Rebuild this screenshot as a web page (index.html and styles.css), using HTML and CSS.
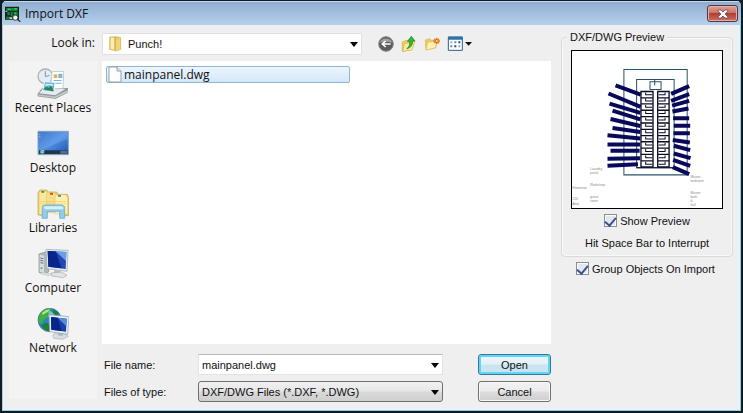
FILE: index.html
```html
<!DOCTYPE html>
<html lang="en">
<head>
<meta charset="utf-8">
<meta name="viewport" content="width=device-width, initial-scale=1">
<title>Import DXF</title>
<link rel="stylesheet" href="styles.css">
</head>
<body>
<form class="window">
  <header class="titlebar">
    <svg class="app-icon" viewBox="14 12 48 48" aria-hidden="true">
      <path fill="#17221c" d="M14 14h42v39H14z"/>
      <path fill="#168a3e" d="M18 18h34v8H18zM21 30h7v10h-7zM31 29h6v14h-6zM40 29h12v12H40zM17 44h14v6H17z"/>
      <path fill="#39c36a" d="M23 20h8v4h-8zM42 18h8v5h-8zM42 32h5v4h-5z"/>
      <path fill="#c9cfc9" d="M15 26h6v3h-6zM28 46h8v5h-8z"/>
      <circle cx="45" cy="47" r="8" fill="#eef3ea" stroke="#353c37" stroke-width="3"/>
      <path stroke="#2a302c" stroke-width="4" d="M51 52l9 7"/>
    </svg>
    <h1 class="title">Import DXF</h1>
    <button class="close" type="button" aria-label="Close">
      <svg viewBox="0 0 12 10" aria-hidden="true"><path d="M1 1h3l2 2 2-2h3v1L8 5l3 3v1H8L6 7 4 9H1V8l3-3-3-3z" fill="#fff" stroke="#6c4a50" stroke-width=".8"/></svg>
    </button>
  </header>

  <div class="content">
    <div class="browser">
      <label class="lookin-label" for="lookin">Look in:</label>
      <div class="lookin-row">
        <div class="combo combo-folder">
          <svg class="folder" viewBox="324 108 48 48" aria-hidden="true">
            <path d="M329 111l19-1 14 3v35l-14 5-19-5z" fill="#e8c55c" stroke="#cfae54" stroke-width="2"/>
            <path d="M332 113h12v37l-12-4z" fill="#fbeeb0"/>
            <path d="M347 118l13-4v34l-13 5z" fill="#f2d573"/>
            <path d="M345 112v38" stroke="#b98d2c" stroke-width="2"/>
          </svg>
          <select id="lookin" class="field"><option>Punch!</option></select>
        </div>
        <div class="tools">
          <button class="tool" type="button" aria-label="Back">
            <svg viewBox="114 106 48 48"><circle cx="138" cy="130" r="22" fill="#5b5b5b" stroke="#8b8b8b" stroke-width="3"/><path d="M119 126a20 18 0 0 1 38 0q-19-6-38 0z" fill="#a0a0a0"/><path d="M152 130h-24m9-9l-10 9 10 9" fill="none" stroke="#fff" stroke-width="5"/></svg>
          </button>
          <button class="tool" type="button" aria-label="Up one level">
            <svg viewBox="183 106 48 48"><path d="M187 124l12-5 6 4 15-3-6 27-27 5z" fill="#f0cf62" stroke="#d0a73c" stroke-width="2"/><path d="M193 130l32-8-9 26-28 4z" fill="#fbec9d" stroke="#d5b145" stroke-width="2"/><path d="M200 144q10-4 9-22h-7l12-15 11 14h-7q0 20-18 23z" fill="#36ba35" stroke="#1c7c25" stroke-width="2"/></svg>
          </button>
          <button class="tool" type="button" aria-label="Create new folder">
            <svg viewBox="252 106 48 48"><path d="M256 118l13-4 5 5 14-2v24l-30 7z" fill="#eccb68" stroke="#d8b24d" stroke-width="2"/><path d="M263 125l30-4-8 21-27 6z" fill="#fcf0b4" stroke="#dfbd5a" stroke-width="2"/><path d="M290 111v20M280 121h20M283 114l14 14M297 114l-14 14" stroke="#e77326" stroke-width="4"/><circle cx="290" cy="121" r="3" fill="#ffe67e"/></svg>
          </button>
          <button class="tool tool-wide" type="button" aria-label="View menu">
            <svg viewBox="321 106 78 48"><path d="M325 109h42v40h-42z" fill="#fff" stroke="#235f94" stroke-width="3"/><path d="M324 108h44v9h-44z" fill="#2c73ad"/><path d="M331 122h6v6h-6zM355 134h6v6h-6z" fill="#98a9bd"/><path d="M343 122h6v6h-6zM331 134h6v6h-6z" fill="#5f8fb1"/><path d="M355 122h6v6h-6zM343 134h6v6h-6z" fill="#244e70"/><path d="M375 124h21l-10 11z" fill="#111"/></svg>
          </button>
        </div>
      </div>

      <nav class="places" aria-label="Places">
        <a class="place" href="#recent">
          <svg viewBox="106 24 96 96" aria-hidden="true"><defs><linearGradient id="screen" x1="0" y1="0" x2="1" y2="1"><stop stop-color="#265bb7"/><stop offset=".5" stop-color="#4f8ce2"/><stop offset="1" stop-color="#1e51ac"/></linearGradient></defs>
            <path d="M108 101l14-18 77 1-2 14-35 18-54-7z" fill="#8e969c"/><path d="M112 100l15-16 65 2-31 20z" fill="#e7eaec"/><path d="M110 103l50 6 37-19v8l-36 17-52-7z" fill="#c5cbd0" stroke="#888e93"/>
            <circle cx="131" cy="49" r="22" fill="#e6edf0" stroke="#a7b1b6" stroke-width="4"/><path d="M131 33v17l13-4" fill="none" stroke="#7f9da9" stroke-width="3"/>
            <path d="M151 35l35-1-2 51-37 2z" fill="#fff" stroke="#abb8bf" stroke-width="2"/><path d="M156 43h11v11h-11z" fill="#e2b25e"/><path d="M170 41h12v13h-12zM156 60h24v3h-24zM156 68h24v3h-24z" fill="#7db4dc"/>
            <path d="M129 65l31 2-4 30-33-5z" fill="#60b4e4" stroke="#f4f7f7" stroke-width="3"/><path d="M125 88q11-12 16-4l7-7 9 17z" fill="#2c8348"/><path d="M132 71l22 1-1 6q-11-4-22 0z" fill="#d8effa"/></svg>
          Recent Places</a>
        <a class="place" href="#desktop">
          <svg viewBox="106 204 96 96" aria-hidden="true"><path d="M109 214h91v70h-91z" fill="url(#screen)" stroke="#83a6c1" stroke-width="3"/><path d="M111 216h87v20L111 273z" fill="#9bd0ff" opacity=".23"/><path d="M112 271h86v11h-86z" fill="#20364f"/><path d="M176 272h21v9h-21z" fill="#51708b"/><circle cx="122" cy="275" r="7" fill="#439eb0"/><path d="M117 274l10-3M117 278l10-2" stroke="#dceeb4" stroke-width="2"/><path d="M113 221h3v3h-3zM113 229h3v3h-3z" fill="#bfdcf5"/></svg>
          Desktop</a>
        <a class="place" href="#libraries">
          <svg viewBox="106 24 96 96" aria-hidden="true"><path d="M109 105V38l6-8h20l5 6h25l4 7h28l4 9v55h-22V88h-45v19z" fill="#e9ca69" stroke="#c6a64b" stroke-width="2"/><path d="M113 40l4-6h16l6 7v61h-26z" fill="#f9e9a0"/><path d="M134 45l4-8h19l7 7v54h-30z" fill="#f6df88" stroke="#d2b259"/><path d="M160 52l5-8h27l6 8v50h-38z" fill="#fff1ac" stroke="#d2b259"/><path d="M119 33h9v5h-9z" fill="#3f9a43"/><path d="M145 38h9v6h-9z" fill="#c15339"/><path d="M169 45h9v5h-9z" fill="#4188bc"/><path d="M114 65h80M114 72h80" stroke="#e9cb70" stroke-width="2"/><path d="M121 115l1-36 8-4h51l8 5v35h-15V94h-37v21z" fill="#91cdeb" stroke="#5ba5cb" stroke-width="2"/><path d="M126 82l6-3h48l5 4-2 5h-53z" fill="#d7f0fc"/></svg>
          Libraries</a>
        <a class="place" href="#computer">
          <svg viewBox="106 204 96 96" aria-hidden="true"><path d="M112 222l20-6 9 5v55l-12 7-17-6z" fill="#aeb7bb" stroke="#80898e" stroke-width="2"/><path d="M114 224l13 3v52l-13-4z" fill="#d5dcdf"/><path d="M116 234l9 2M116 241l9 2M116 248l9 2" stroke="#637078" stroke-width="3"/><path d="M117 262h5v5h-5z" fill="#55a653"/><path d="M133 208l66 3-3 63-60-8z" fill="#e7ebed" stroke="#9aa4aa" stroke-width="2"/><path d="M138 213l56 3-2 51-52-7z" fill="#2049b2"/><path d="M138 213l24 1 18 51-40-5z" fill="#09258c"/><path d="M162 214l32 2-1 27z" fill="#6b9eea"/><path d="M158 270l18 2 1 11-20-2z" fill="#b5bec4"/><path d="M148 279l31-3 17 10-11 7-35-5z" fill="#e1e5e7" stroke="#a3abb0" stroke-width="2"/><path d="M123 277l26 5-6 6-27-7z" fill="#dce1e3" stroke="#a7b0b6"/></svg>
          Computer</a>
        <a class="place" href="#network">
          <svg viewBox="106 54 96 96" aria-hidden="true"><circle cx="144" cy="90" r="35" fill="#2587bf" stroke="#3a769d" stroke-width="2"/><path d="M112 77q10-21 31-22l8 9-14 8 4 9-15 8-5 13-11-7z" fill="#43ad43"/><path d="M118 106l17-9 14 15-7 12q-15-3-24-18zM156 58l16 11-9 8-10-6z" fill="#237d38"/><path d="M121 69q12-12 24-11l-6 7-17 10z" fill="#b7e57d"/><path d="M142 62q14 4 20 18h-23z" fill="#9fd9ee" opacity=".7"/><path d="M160 129l25 1 15 9-17 9-27-3-3-9z" fill="#d7dde0" stroke="#aab1b6" stroke-width="2"/><path d="M169 120h15v17h-15z" fill="#aeb8be"/><path d="M142 74l60 6-4 53-54-8z" fill="#e7edf2" stroke="#909fa9" stroke-width="2"/><path d="M148 81l47 5-2 39-44-6z" fill="#173fac"/><path d="M148 81l20 2 12 40-31-4z" fill="#09238e"/><path d="M168 83l27 3-1 23z" fill="#568ae0"/></svg>
          Network</a>
      </nav>

      <div class="files">
        <button class="file" type="button">
          <svg viewBox="0 0 14 17" aria-hidden="true"><path d="M1 1h8l4 4v11H1z" fill="#fff" stroke="#96a0aa"/><path d="M9 1v4h4" fill="#e6ebef" stroke="#96a0aa"/></svg>
          mainpanel.dwg
        </button>
      </div>

      <div class="entry">
        <label for="filename">File name:</label>
        <div class="combo"><input id="filename" class="field" type="text" value="mainpanel.dwg"></div>
        <button class="button primary" type="submit">Open</button>
        <label for="filetype">Files of type:</label>
        <div class="combo"><select id="filetype" class="field raised"><option>DXF/DWG Files (*.DXF, *.DWG)</option></select></div>
        <button class="button" type="button">Cancel</button>
      </div>
    </div>

    <aside class="side">
      <fieldset class="group">
        <legend>DXF/DWG Preview</legend>
        <svg class="preview" viewBox="21 -27 448 468" role="img" aria-label="Drawing preview">
          <g fill="none" stroke="#28506a" stroke-width="3">
            <path d="M176 28h189v315H176zM214 58h112v264H214zM254 65h33v23h-33zM268 58v18"/>
          </g>
          <g fill="none" stroke="#080c24" stroke-width="4">
            <path d="M227 94h36v225h-36zM277 94h34v225h-34z"/>
            <path d="M227 113h36m-36 18h36m-36 19h36m-36 19h36m-36 19h36m-36 19h36m-36 19h36m-36 18h36m-36 19h36m-36 19h36m-36 19h36M277 113h34m-34 18h34m-34 19h34m-34 19h34m-34 19h34m-34 19h34m-34 19h34m-34 18h34m-34 19h34m-34 19h34m-34 19h34"/>
            <path d="M241 97v7h20m-20 11v7h20m-20 12v7h20m-20 12v7h20m-20 12v7h20m-20 12v7h20m-20 12v7h20m-20 12v7h20m-20 11v7h20m-20 12v7h20m-20 12v7h20m-20 12v7h20M280 104h19v-7m-19 25h19v-7m-19 26h19v-7m-19 26h19v-7m-19 26h19v-7m-19 26h19v-7m-19 26h19v-7m-19 26h19v-7m-19 25h19v-7m-19 26h19v-7m-19 26h19v-7m-19 26h19v-7" stroke-width="3"/>
            <path d="M214 322h112" stroke-width="3"/>
          </g>
          <g fill="none" stroke="#08085c" stroke-width="12">
            <path d="M151 76l75 27M130 100l96 40M133 130l92 28M142 151l83 26M136 176l89 21M142 203l83 12M127 225l98 9M127 252h97M136 271h87M127 295l97-2M127 316l91-5"/>
            <path d="M317 101l54-23M317 122l54-20M320 136l51-14M321 154l48-9M323 174h48M325 196h49M324 219h49M322 239l51 7M325 256l49 13M325 279l50 14M323 298l51 18M322 320l49 21"/>
          </g>
          <g class="notes">
            <text x="75" y="327">Laundry</text><text x="75" y="340">panel</text><text x="75" y="375">Workshop</text><text x="22" y="386">Hometran</text>
            <text x="75" y="411">guest</text><text x="75" y="424">room</text><text x="22" y="417">220</text><text x="22" y="432">Amp</text>
            <text x="375" y="351">Master</text><text x="375" y="363">bedroom</text><text x="375" y="399">Master</text><text x="375" y="411">bath</text><text x="375" y="423">&amp;</text><text x="375" y="435">hall</text>
          </g>
        </svg>
        <label class="check"><input type="checkbox" checked>Show Preview</label>
        <p class="hint">Hit Space Bar to Interrupt</p>
      </fieldset>
      <label class="check check-import"><input type="checkbox" checked>Group Objects On Import</label>
    </aside>
  </div>
</form>
</body>
</html>
```
FILE: styles.css
```css
* { box-sizing: border-box; }

body {
  margin: 0;
  background: #10202c;
  color: #111;
  font-family: "Liberation Sans", Arial, sans-serif;
  font-size: 11px;
}

button, input, select { font: inherit; color: inherit; margin: 0; }

.window {
  display: flex;
  flex-direction: column;
  min-height: 100vh;
  border: 2px solid #0b1c26;
  border-top-width: 1px;
  border-radius: 6px 6px 0 0;
  background: #efefef;
  box-shadow: inset -1px -1px #9ccbd6, inset 1px 0 #b4cbd6, inset -3px -3px #e5f4fb;
  overflow: hidden;
}

.titlebar {
  display: flex;
  align-items: center;
  gap: 4px;
  height: 24px;
  padding: 0 3px;
  background: linear-gradient(#91aed0, #a0bddd 45%, #b5d0ec);
  border-top: 1px solid #c6d8e9;
}

.app-icon { width: 16px; height: 16px; }

.title {
  flex: 1;
  margin: 0;
  font: 12px/20px "Open Sans", sans-serif;
}

.close {
  display: grid;
  place-items: center;
  width: 31px;
  height: 17px;
  padding: 0;
  border: 1px solid #56333d;
  border-radius: 3px;
  background: linear-gradient(#dda29a, #cb7468 45%, #b23f34 50%, #c9705f);
  box-shadow: inset 0 0 0 1px #e4b1aa;
}

.close svg { width: 12px; height: 10px; }

.content {
  flex: 1;
  display: flex;
  gap: 10px;
  padding: 8px 8px 9px 7px;
}

.browser {
  flex: 1;
  display: grid;
  grid-template-columns: 88px 1fr;
  grid-template-rows: 22px 1fr auto;
  column-gap: 5px;
  row-gap: 6px;
}

.lookin-label {
  justify-self: end;
  padding-right: 2px;
  font: 12px/20px "Open Sans", sans-serif;
}

.lookin-row {
  display: flex;
  align-items: center;
  gap: 16px;
  padding-right: 78px;
}

.combo { position: relative; height: 21px; }
.combo-folder { flex: 1; height: 22px; }

.combo::after {
  content: "";
  position: absolute;
  top: 9px;
  right: 4px;
  border: 4px solid transparent;
  border-top: 5px solid #000;
  border-bottom: 0;
  pointer-events: none;
}

.field {
  display: block;
  width: 100%;
  height: 100%;
  padding: 0 20px 0 3px;
  border: 1px solid #e3e3e3;
  border-top-color: #b5b9bd;
  border-radius: 0;
  background: #fff;
  appearance: none;
}

.combo-folder .field { padding-left: 25px; border-color: #dfe0e2; }

.field.raised {
  border: 1px solid #707070;
  border-radius: 3px;
  background: linear-gradient(#f1f1f1, #e6e6e6 48%, #d9d9d9 52%, #cfcfcf);
}

.folder {
  position: absolute;
  top: 3px;
  left: 6px;
  width: 16px;
  height: 16px;
}

.tools { display: flex; gap: 7px; }

.tool {
  width: 16px;
  height: 16px;
  padding: 0;
  border: 0;
  background: none;
}

.tool-wide { width: 26px; }
.tool svg { display: block; width: 100%; height: 100%; }

.places {
  grid-row: 2 / 4;
  display: flex;
  flex-direction: column;
  gap: 12px;
  margin-bottom: 3px;
  padding-top: 7px;
  background: #f3f3f3;
}

.place {
  display: flex;
  flex-direction: column;
  align-items: center;
  color: inherit;
  font: 12px/16px "Open Sans", sans-serif;
  text-decoration: none;
  white-space: nowrap;
}

.place svg { width: 32px; height: 32px; }

.files {
  padding: 5px 4px;
  background: #fff;
}

.file {
  display: flex;
  align-items: center;
  gap: 2px;
  width: 244px;
  height: 17px;
  padding: 0 1px;
  border: 1px solid #8fb4d6;
  border-radius: 2px;
  background: linear-gradient(#eef6fd, #d3e7f8);
  font: 12px/15px "Open Sans", sans-serif;
}

.file svg { width: 14px; height: 17px; }

.entry {
  display: grid;
  grid-template-columns: 94px 1fr 73px;
  row-gap: 6px;
  align-items: center;
  padding: 4px 0 0 2px;
}

.entry .combo { margin-right: 35px; }

.button {
  height: 21px;
  padding: 0;
  border: 1px solid #707070;
  border-radius: 3px;
  background: linear-gradient(#f2f2f2, #ebebeb 48%, #dddddd 52%, #cfcfcf);
  box-shadow: inset 0 0 0 1px #f8f8f8;
}

.button.primary {
  border-color: #33789c;
  background: linear-gradient(#eef7fa, #e2f1f6 48%, #cbe4ee 52%, #c5e6f3);
  box-shadow: inset 0 0 0 2px #62d4f7;
}

.side {
  width: 172px;
  padding-top: 4px;
}

.group {
  position: relative;
  display: flex;
  flex-direction: column;
  align-items: center;
  min-width: 0;
  margin: 0;
  padding: 12px 9px 5px;
  border: 1px solid #dadada;
  border-radius: 4px;
  box-shadow: inset 0 0 0 1px #f8f8f8;
}

.group legend {
  position: absolute;
  top: -9px;
  left: 5px;
  padding: 0 3px;
  background: #efefef;
  line-height: 16px;
}

.preview {
  display: block;
  width: 100%;
  border: 1px solid #000;
  background: #fff;
}

.notes { fill: #8c8c8c; font-size: 10px; }

.check {
  display: flex;
  align-items: center;
  gap: 3px;
  margin-top: 4px;
  line-height: 16px;
}

.check input {
  display: grid;
  place-items: center;
  width: 13px;
  height: 13px;
  border: 1px solid #8a8f94;
  background: #e3e8ee;
  box-shadow: inset 0 0 0 1px #fafafa;
  appearance: none;
}

.check input:checked::after {
  content: "";
  width: 5px;
  height: 9px;
  margin-bottom: 2px;
  border: solid #3b4f93;
  border-width: 0 2px 2px 0;
  transform: rotate(40deg);
}

.check-import { margin-left: 15px; }

.hint { margin: 6px 0 0; line-height: 16px; }
```
